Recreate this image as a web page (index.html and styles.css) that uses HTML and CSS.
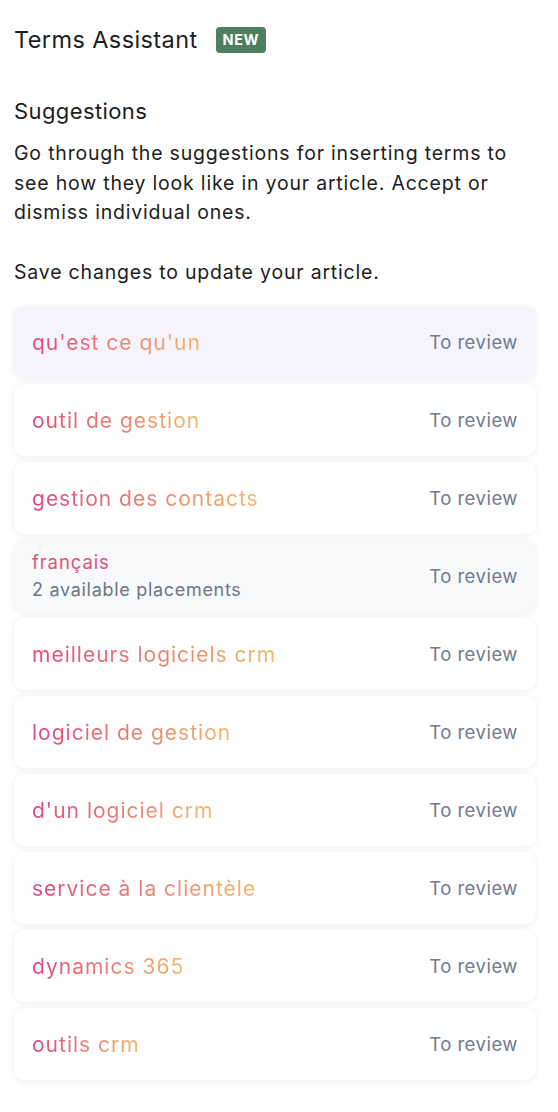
FILE: index.html
```html
<!DOCTYPE html>
<html>
<head>
	<title>Terms Assistant</title>
	<link rel="stylesheet" href="styles.css">
</head>
<body>

	<div class="panel">
		<div class="header">
			<h1 class="title">Terms Assistant</h1>
			<span class="badge">NEW</span>
		</div>

		<h2 class="subtitle">Suggestions</h2>
		<p class="intro">Go through the suggestions for inserting terms to see how they look like in your article. Accept or dismiss individual ones.</p>
		<p class="intro">Save changes to update your article.</p>

		<div class="list">
			<div class="item active">
				<span class="term">qu'est ce qu'un</span>
				<span class="status">To review</span>
			</div>
			<div class="item">
				<span class="term">outil de gestion</span>
				<span class="status">To review</span>
			</div>
			<div class="item">
				<span class="term">gestion des contacts</span>
				<span class="status">To review</span>
			</div>
			<div class="item multi">
				<div class="info">
					<span class="term small">français</span>
					<span class="placements">2 available placements</span>
				</div>
				<span class="status">To review</span>
			</div>
			<div class="item">
				<span class="term">meilleurs logiciels crm</span>
				<span class="status">To review</span>
			</div>
			<div class="item">
				<span class="term">logiciel de gestion</span>
				<span class="status">To review</span>
			</div>
			<div class="item">
				<span class="term">d'un logiciel crm</span>
				<span class="status">To review</span>
			</div>
			<div class="item">
				<span class="term">service à la clientèle</span>
				<span class="status">To review</span>
			</div>
			<div class="item">
				<span class="term">dynamics 365</span>
				<span class="status">To review</span>
			</div>
			<div class="item">
				<span class="term">outils crm</span>
				<span class="status">To review</span>
			</div>
		</div>
	</div>

</body>
</html>
```

FILE: styles.css
```css
body{
	margin: 0;
	background: #fff;
	font-family: Inter, "Noto Sans", sans-serif;
	color: #1c1d21;
}

.panel{
	padding: 22px 22px 30px 14px;
}

.header{
	display: flex;
	align-items: center;
	gap: 18px;
}

.title{
	margin: 0;
	font-size: 23.5px;
	font-weight: 400;
	line-height: 36px;
	letter-spacing: .4px;
}

.badge{
	background: #4b7f5d;
	color: #fff;
	font-size: 14.5px;
	font-weight: 700;
	padding: 4px 7px;
	border-radius: 4px;
	line-height: 18px;
	letter-spacing: .6px;
}

.subtitle{
	margin: 35px 0 10px;
	font-size: 22px;
	font-weight: 400;
	line-height: 36px;
	letter-spacing: .4px;
}

.intro{
	margin: 0 0 30px;
	font-size: 19.5px;
	line-height: 29.5px;
	letter-spacing: .8px;
}

.list{
	display: flex;
	flex-direction: column;
	gap: 6px;
	margin-top: -11px;
}

.item{
	display: flex;
	align-items: center;
	justify-content: space-between;
	height: 72px;
	padding: 0 18px;
	background: #fff;
	border-radius: 10px;
	box-shadow: 0 1px 6px rgba(30, 40, 70, .09);
}

.item.active{
	background: #f5f3fb;
}

.item.multi{
	background: #f7f9fb;
}

.term{
	font-size: 21px;
	letter-spacing: 1px;
	background-image: linear-gradient(90deg, #e0487a, #f3b86a);
	-webkit-background-clip: text;
	background-clip: text;
	color: transparent;
}

.term.small{
	font-size: 18.5px;
	letter-spacing: .9px;
	background-image: none;
	color: #e0527c;
	line-height: 24px;
}

.info{
	display: flex;
	flex-direction: column;
	gap: 4px;
}

.placements{
	font-size: 18px;
	line-height: 24px;
	letter-spacing: .7px;
	color: #6e7585;
}

.status{
	font-size: 18.5px;
	letter-spacing: .5px;
	color: #727a8c;
}
```
